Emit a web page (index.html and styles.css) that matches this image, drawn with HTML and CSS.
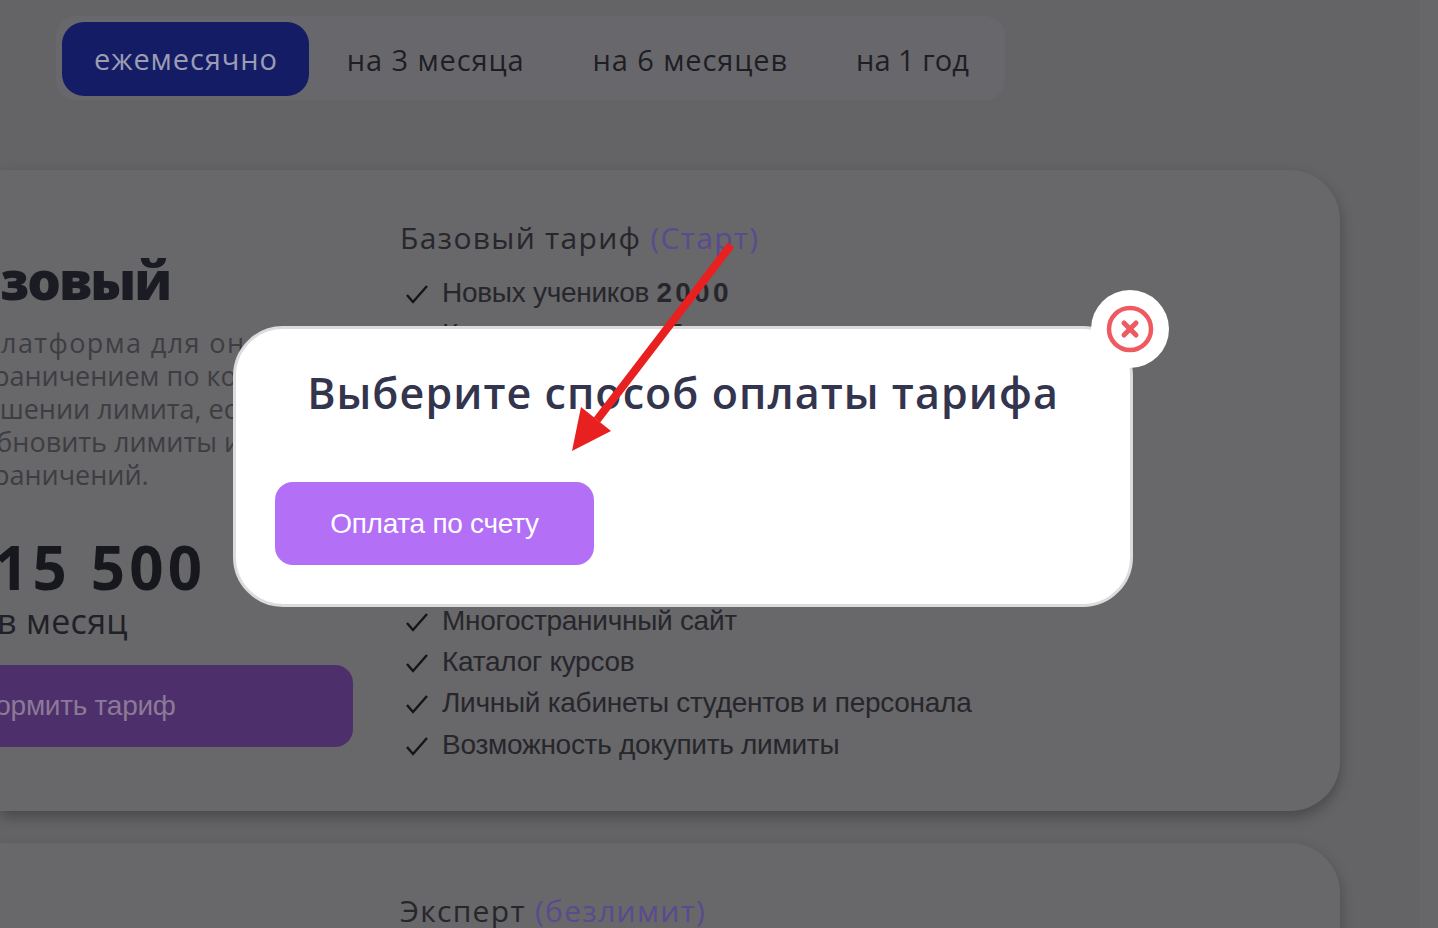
FILE: index.html
```html
<!DOCTYPE html>
<html lang="ru">
<head>
  <meta charset="UTF-8">
  <title>Выберите способ оплаты тарифа</title>
  <link rel="stylesheet" href="styles.css">
</head>
<body>

  <div class="page">
    <div class="tabs">
      <a class="tab tab-active">ежемесячно</a>
      <a class="tab">на 3 месяца</a>
      <a class="tab">на 6 месяцев</a>
      <a class="tab">на 1 год</a>
    </div>

    <section class="card">
      <div class="plan">
        <h2 class="plan-name">Базовый</h2>
        <p class="plan-text">
          <span class="line line-first">Платформа для онлайн-школы</span>
          <span class="line line-b">ограничением по количеству</span>
          <span class="line line-c">превышении лимита, если</span>
          <span class="line line-a">обновить лимиты и</span>
          <span class="line line-b">ограничений.</span>
        </p>
        <div class="plan-price">15 500</div>
        <div class="plan-period">в месяц</div>
        <a class="plan-button"><span>Оформить тариф</span></a>
      </div>
      <div class="features">
        <h3 class="features-title">Базовый тариф <span class="accent">(Старт)</span></h3>
        <ul class="feature-list">
          <li><svg class="check" viewBox="0 0 24 20"><path d="M2 11l6 7L22 2"/></svg><span>Новых учеников <b>2000</b></span></li>
          <li><svg class="check" viewBox="0 0 24 20"><path d="M2 11l6 7L22 2"/></svg><span>Кураторов в чате 5</span></li>
          <li><svg class="check" viewBox="0 0 24 20"><path d="M2 11l6 7L22 2"/></svg><span>Тестирование</span></li>
          <li><svg class="check" viewBox="0 0 24 20"><path d="M2 11l6 7L22 2"/></svg><span>Сертификаты</span></li>
          <li><svg class="check" viewBox="0 0 24 20"><path d="M2 11l6 7L22 2"/></svg><span>Домашние задания</span></li>
          <li><svg class="check" viewBox="0 0 24 20"><path d="M2 11l6 7L22 2"/></svg><span>Чат с кураторами</span></li>
          <li><svg class="check" viewBox="0 0 24 20"><path d="M2 11l6 7L22 2"/></svg><span>Статистика</span></li>
          <li><svg class="check" viewBox="0 0 24 20"><path d="M2 11l6 7L22 2"/></svg><span>Прием оплаты</span></li>
          <li><svg class="check" viewBox="0 0 24 20"><path d="M2 11l6 7L22 2"/></svg><span>Многостраничный сайт</span></li>
          <li><svg class="check" viewBox="0 0 24 20"><path d="M2 11l6 7L22 2"/></svg><span>Каталог курсов</span></li>
          <li><svg class="check" viewBox="0 0 24 20"><path d="M2 11l6 7L22 2"/></svg><span>Личный кабинеты студентов и персонала</span></li>
          <li><svg class="check" viewBox="0 0 24 20"><path d="M2 11l6 7L22 2"/></svg><span>Возможность докупить лимиты</span></li>
        </ul>
      </div>
    </section>

    <section class="card card-next">
      <div class="plan"></div>
      <div class="features">
        <h3 class="features-title">Эксперт <span class="accent">(безлимит)</span></h3>
      </div>
    </section>
  </div>

  <div class="modal">
    <h1 class="modal-title">Выберите способ оплаты тарифа</h1>
    <a class="pay-button">Оплата по счету</a>
    <div class="modal-close">
      <svg viewBox="0 0 48 48" width="48" height="48">
        <circle cx="24" cy="24" r="21" fill="none" stroke="#ef5a60" stroke-width="4.5"/>
        <path d="M18 18l12 12M30 18l-12 12" fill="none" stroke="#ef5a60" stroke-width="5" stroke-linecap="round"/>
      </svg>
    </div>
  </div>

  <svg class="arrow" viewBox="0 0 1438 928">
    <path d="M731 245L597 420" fill="none" stroke="#e8201f" stroke-width="8"/>
    <path d="M572 451L581 407L611 431Z" fill="#e8201f"/>
  </svg>

</body>
</html>
```

FILE: styles.css
```css
* {
  box-sizing: border-box;
}

html, body {
  margin: 0;
  height: 100%;
  overflow: hidden;
}

body {
  background: linear-gradient(90deg, #646467 1420px, #676769 1420px);
  font-family: 'Liberation Sans', Arial, sans-serif;
  color: #202027;
}

.page {
  height: 928px;
  overflow: hidden;
  padding-top: 16px;
}

.tabs {
  display: inline-flex;
  align-items: center;
  height: 84px;
  margin-left: 56px;
  padding: 2px 36px 0 6px;
  background-color: #68686c;
  border-radius: 20px;
}

.tab {
  margin-right: 68px;
  font-family: 'Open Sans', sans-serif;
  font-size: 29px;
  letter-spacing: 0.9px;
  color: #1e1e24;
}

.tab:last-child {
  margin-right: 0;
  letter-spacing: 0;
}

.tab-active {
  height: 74px;
  line-height: 74px;
  margin-right: 38px;
  padding: 0 31px 0 32px;
  background-color: #151c66;
  border-radius: 22px;
  color: #9b9cb2;
}

.card {
  display: flex;
  width: 1340px;
  height: 641px;
  margin-top: 70px;
  background-color: #686769;
  border-radius: 0 50px 50px 0;
  box-shadow: 0 6px 14px rgba(0, 0, 0, 0.28);
}

.card-next {
  margin-top: 32px;
}

.plan {
  width: 353px;
  padding-top: 77px;
}

.plan-name {
  margin: 0 0 0 -63px;
  font-family: 'Open Sans', sans-serif;
  font-size: 53px;
  line-height: 66px;
  font-weight: 800;
  letter-spacing: -2px;
  white-space: nowrap;
  color: #1b1b24;
}

.plan-text {
  margin: 13px 0 0;
  font-family: 'Open Sans', sans-serif;
  font-size: 27px;
  line-height: 33px;
  color: #3d3d42;
}

.line {
  display: block;
  white-space: nowrap;
}

.line-first {
  margin-left: -20px;
  letter-spacing: 1.4px;
}

.line-a {
  margin-left: -20px;
}

.line-b {
  margin-left: -35px;
}

.line-c {
  margin-left: -85px;
}

.plan-price {
  margin: 41px 0 0 -6px;
  font-family: 'Open Sans', sans-serif;
  font-size: 60px;
  line-height: 70px;
  font-weight: 700;
  letter-spacing: 4.2px;
  color: #17171e;
}

.plan-period {
  margin-left: -3px;
  font-family: 'Open Sans', sans-serif;
  font-size: 34px;
  line-height: 38px;
  letter-spacing: 0.3px;
  color: #202027;
}

.plan-button {
  display: block;
  height: 82px;
  margin: 25px 0 0 -100px;
  padding-left: 51px;
  background-color: #4d2f6b;
  border-radius: 18px;
  font-size: 28px;
  line-height: 82px;
  letter-spacing: -0.27px;
  color: #8b7a96;
}

.features {
  margin-left: 47px;
  padding-top: 48px;
}

.features-title {
  margin: 0;
  font-family: 'Open Sans', sans-serif;
  font-size: 30px;
  line-height: 40px;
  font-weight: 400;
  letter-spacing: 1.3px;
  color: #26262c;
}

.accent {
  color: #5a4a8f;
}

.feature-list {
  margin: 14px 0 0;
  padding: 0;
  list-style: none;
}

.feature-list li {
  display: flex;
  align-items: center;
  height: 41.1px;
  font-size: 28px;
  letter-spacing: -0.27px;
  color: #26262c;
}

.feature-list b {
  letter-spacing: 3.2px;
}

.check {
  width: 24px;
  height: 20px;
  margin: 2px 13px 0 5px;
  fill: none;
  stroke: #14141a;
  stroke-width: 2.4;
}

.modal {
  position: absolute;
  left: 233px;
  top: 326px;
  width: 900px;
  height: 281px;
  background-color: #fff;
  border: 3px solid #dcdcdf;
  border-radius: 50px;
}

.modal-title {
  margin: 36px 0 0;
  font-family: 'Open Sans', sans-serif;
  font-size: 43px;
  line-height: 56px;
  font-weight: 600;
  letter-spacing: 1.05px;
  text-align: center;
  color: #33344d;
}

.pay-button {
  display: block;
  width: 319px;
  height: 83px;
  margin: 61px 0 0 39px;
  background-color: #b36ff5;
  border-radius: 18px;
  font-size: 28px;
  line-height: 84px;
  letter-spacing: -0.27px;
  text-align: center;
  color: #fff;
}

.modal-close {
  position: absolute;
  left: 855px;
  top: -39px;
  display: flex;
  align-items: center;
  justify-content: center;
  width: 78px;
  height: 78px;
  background-color: #fff;
  border-radius: 50%;
}

.arrow {
  position: absolute;
  left: 0;
  top: 0;
  width: 1438px;
  height: 928px;
  pointer-events: none;
}
```
